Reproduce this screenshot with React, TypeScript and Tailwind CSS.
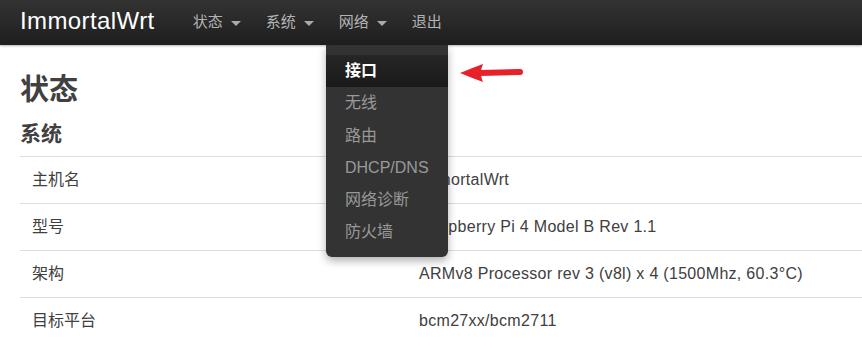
import React from "react";

const rows = [
  { label: "主机名", value: "ImmortalWrt" },
  { label: "型号", value: "Raspberry Pi 4 Model B Rev 1.1" },
  { label: "架构", value: "ARMv8 Processor rev 3 (v8l) x 4 (1500Mhz, 60.3°C)" },
  { label: "目标平台", value: "bcm27xx/bcm2711" },
];

const menu = ["接口", "无线", "路由", "DHCP/DNS", "网络诊断", "防火墙"];

const Caret = () => (
  <span className="ml-[8px] inline-block w-0 h-0 border-x-[5px] border-x-transparent border-t-[5px] border-t-[#aaa] translate-y-[1px]" />
);

const NavItem = ({ label, caret = true }: { label: string; caret?: boolean }) => (
  <div className="flex items-center text-[15px] text-[#b3b3b3] mr-[25px]">
    {label}
    {caret && <Caret />}
  </div>
);

export default function App() {
  return (
    <div
      className="relative w-[862px] h-[339px] overflow-hidden bg-white text-[#404040]"
      style={{ fontFamily: '"Liberation Sans", "Noto Sans CJK SC", sans-serif' }}
    >
      {/* top navbar */}
      <div className="h-[45px] flex items-center pl-[20px] bg-gradient-to-b from-[#333] to-[#1e1e1e] shadow-[0_1px_2px_rgba(0,0,0,0.3)]">
        <div className="text-[24px] text-white tracking-[0.4px] mr-[38px] -translate-y-[2px]">ImmortalWrt</div>
        <NavItem label="状态" />
        <NavItem label="系统" />
        <NavItem label="网络" />
        <NavItem label="退出" caret={false} />
      </div>

      {/* content */}
      <div className="pl-[20px]">
        <h2 className="text-[29px] font-bold leading-none mt-[31px]">状态</h2>
        <h3 className="text-[21px] font-bold leading-none mt-[18px] mb-[12px]">系统</h3>
        <div className="border-t border-[#ddd]">
          {rows.map((r) => (
            <div key={r.label} className="grid grid-cols-[399px_1fr] h-[47px] items-center border-b border-[#ddd] text-[16px]">
              <div className="pl-[12px]">{r.label}</div>
              <div className="tracking-[0.3px]">{r.value}</div>
            </div>
          ))}
        </div>
      </div>

      {/* open dropdown */}
      <div className="absolute left-[326px] top-[45px] w-[122px] h-[212px] bg-[#333] rounded-b-[6px] pt-[10px] shadow-[0_4px_8px_rgba(0,0,0,0.3)]">
        {menu.map((m, i) => (
          <div
            key={m}
            className={
              i === 0
                ? "h-[32.25px] flex items-center pl-[19px] text-[16px] font-bold text-white bg-gradient-to-b from-[#262626] to-[#1a1a1a]"
                : "h-[32.25px] flex items-center pl-[19px] text-[16px] text-[#999]"
            }
          >
            {m}
          </div>
        ))}
      </div>

      {/* annotation arrow */}
      <svg className="absolute left-[456px] top-[60px]" width="70" height="26" viewBox="0 0 70 26">
        <path d="M24 13 L64 12" stroke="#e8202a" strokeWidth="6" strokeLinecap="round" />
        <path d="M4 13 Q16 8 27 4 Q23 13 27 22 Q16 18 4 13 Z" fill="#e8202a" />
      </svg>
    </div>
  );
}
